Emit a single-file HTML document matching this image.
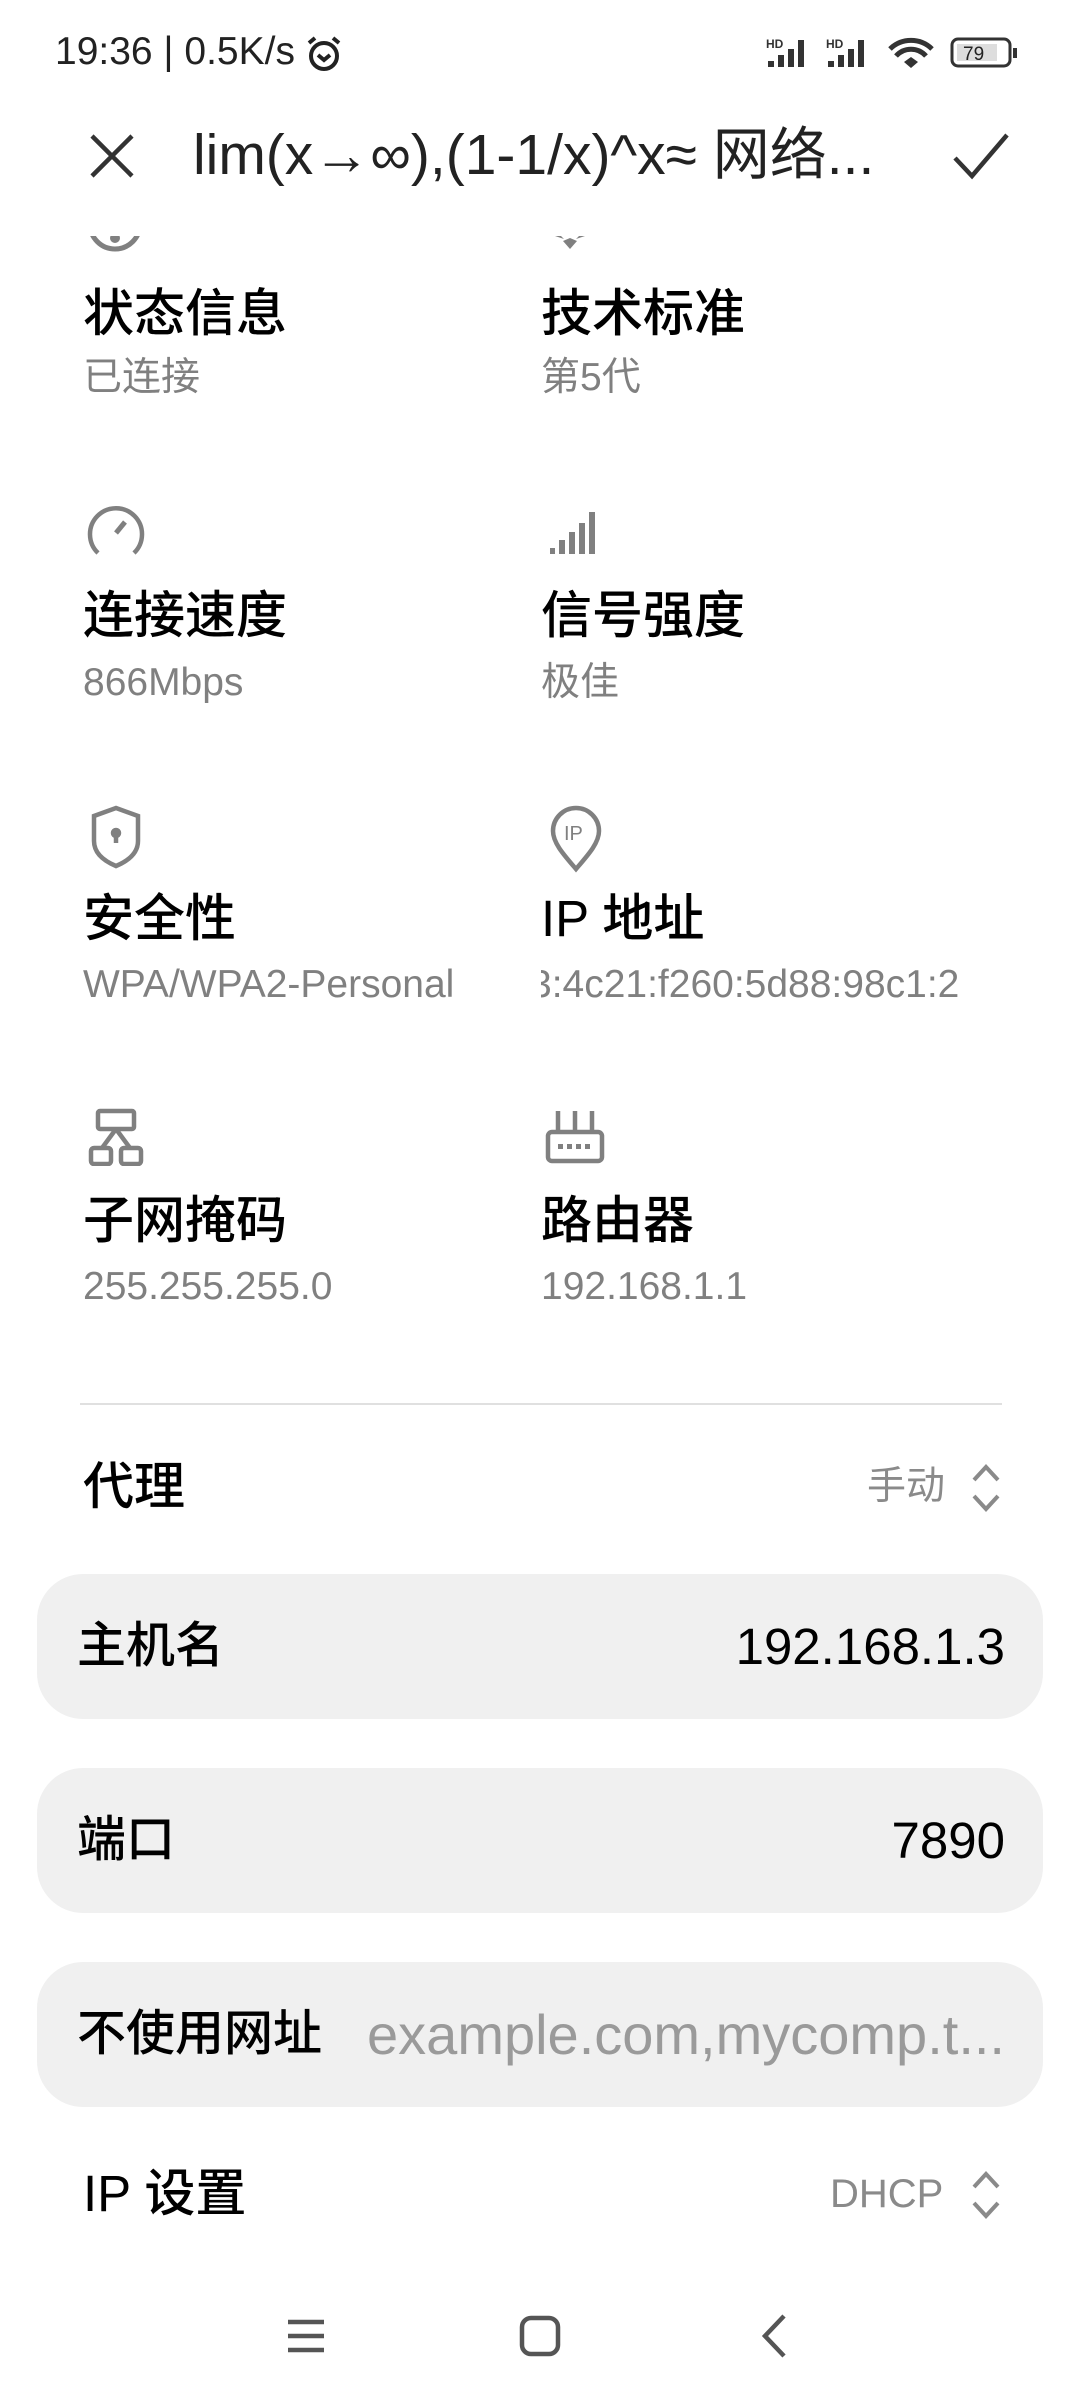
<!DOCTYPE html>
<html><head><meta charset="utf-8"><style>
*{margin:0;padding:0;box-sizing:border-box}
body{width:1080px;height:2400px;background:#fff;position:relative;overflow:hidden;font-family:"Liberation Sans","Noto Sans CJK SC",sans-serif;color:#000}
.a{position:absolute;white-space:nowrap}
.t{font-size:51px;line-height:60px;color:#000;font-weight:500}
.s{font-size:39px;line-height:44px;color:#808080}
.card{position:absolute;left:37px;width:1006px;height:145px;background:#f0f0f0;border-radius:46px}
.card .l{position:absolute;left:40px;top:0;line-height:145px;font-size:49px;color:#000;font-weight:500}
.card .r{position:absolute;right:38px;top:0;line-height:145px;font-size:51px;color:#000}
svg{position:absolute}
</style></head><body>
<!-- status bar -->
<div class="a" style="left:55px;top:29px;font-size:39px;line-height:46px;color:#222">19:36 | 0.5K/s</div>
<svg style="left:304px;top:34px" width="40" height="40" viewBox="0 0 40 40" fill="none" stroke="#222" stroke-width="4"><circle cx="20" cy="22" r="13"/><path d="M14 21l6 5 6-5"/><path d="M5 9l6-5M35 9l-6-5"/></svg>
<svg style="left:766px;top:37px" width="260" height="32" viewBox="0 0 260 32" fill="#333">
<text x="0" y="11" font-size="12" font-weight="bold" font-family="Liberation Sans">HD</text>
<rect x="2" y="24" width="6" height="6"/><rect x="12" y="18" width="6" height="12"/><rect x="22" y="12" width="6" height="18"/><rect x="32" y="3" width="6" height="27"/>
<g transform="translate(60,0)"><text x="0" y="11" font-size="12" font-weight="bold" font-family="Liberation Sans">HD</text>
<rect x="2" y="24" width="6" height="6"/><rect x="12" y="18" width="6" height="12"/><rect x="22" y="12" width="6" height="18"/><rect x="32" y="3" width="6" height="27"/></g>
<g fill="none" stroke="#333" stroke-width="5"><path d="M124 12a30 30 0 0 1 42 0"/><path d="M130 19a20 20 0 0 1 30 0"/></g>
<path d="M138 25l7-5 7 5-7 6z"/>
<rect x="186" y="2" width="58" height="27" rx="6" fill="none" stroke="#333" stroke-width="3"/>
<rect x="191" y="7" width="40" height="17" fill="#ddd"/>
<text x="197" y="23" font-size="19" font-family="Liberation Sans" fill="#222">79</text>
<rect x="247" y="11" width="4" height="10"/>
</svg>
<!-- title bar -->
<svg style="left:89px;top:133px" width="46" height="46" viewBox="0 0 46 46" stroke="#333" stroke-width="4.5"><path d="M3 3l40 40M43 3L3 43"/></svg>
<div class="a" style="left:193px;top:121px;font-size:57px;line-height:68px;color:#222">lim(x→∞),(1-1/x)^x≈ 网络...</div>
<svg style="left:952px;top:132px" width="58" height="48" viewBox="0 0 58 48" fill="none" stroke="#333" stroke-width="4.5"><path d="M3 26l17 18L55 3"/></svg>
<!-- partial icons -->
<svg style="left:86px;top:190px" width="62" height="65" viewBox="0 0 62 65" fill="none" stroke="#808080" stroke-width="5"><circle cx="29" cy="34" r="25"/><circle cx="29" cy="48" r="2.5" fill="#808080"/></svg>
<svg style="left:555px;top:236px" width="30" height="14" viewBox="0 0 30 14" fill="#808080"><path d="M0 0h6l3 3zM30 0h-6l-3 3zM8 5l7-3 7 3-7 8z"/></svg>
<div style="position:absolute;left:0;top:186px;width:1080px;height:50px;background:#fff"></div>
<!-- grid -->
<div class="a t" style="left:83px;top:284px">状态信息</div>
<div class="a s" style="left:83px;top:356px">已连接</div>
<div class="a t" style="left:541px;top:284px">技术标准</div>
<div class="a s" style="left:541px;top:356px">第5代</div>

<svg style="left:86px;top:503px" width="60" height="54" viewBox="0 0 60 54" fill="none" stroke="#808080" stroke-width="4.5"><path d="M12 50A26 26 0 1 1 48 50"/><path d="M30 30l9-11" stroke-width="5"/></svg>
<svg style="left:550px;top:510px" width="54" height="44" viewBox="0 0 54 44" fill="#808080"><rect x="0" y="38" width="5" height="6"/><rect x="9" y="30" width="6" height="14"/><rect x="19" y="22" width="6" height="22"/><rect x="29" y="13" width="6" height="31"/><rect x="39" y="2" width="6" height="42"/></svg>
<div class="a t" style="left:83px;top:586px">连接速度</div>
<div class="a s" style="left:83px;top:661px">866Mbps</div>
<div class="a t" style="left:541px;top:586px">信号强度</div>
<div class="a s" style="left:541px;top:661px">极佳</div>

<svg style="left:88px;top:805px" width="56" height="64" viewBox="0 0 56 64" fill="none" stroke="#808080" stroke-width="4.5"><path d="M28 3L50 11V36C50 48 40 56 28 61C16 56 6 48 6 36V11Z"/><circle cx="28" cy="28" r="3" fill="#808080"/><path d="M28 30v8"/></svg>
<svg style="left:549px;top:805px" width="54" height="68" viewBox="0 0 54 68" fill="none" stroke="#808080" stroke-width="4.5"><path d="M27 64C15 50 4 38 4 26A23 23 0 0 1 50 26C50 38 39 50 27 64Z"/><text x="15" y="35" font-size="20" font-family="Liberation Sans" fill="#808080" stroke="none">IP</text></svg>
<div class="a t" style="left:83px;top:889px">安全性</div>
<div class="a s" style="left:83px;top:963px">WPA/WPA2-Personal</div>
<div class="a t" style="left:541px;top:889px">IP 地址</div>
<div class="a s" style="left:530px;top:963px;width:470px;overflow:hidden">3:4c21:f260:5d88:98c1:2</div>
<div style="position:absolute;left:470px;top:958px;width:71px;height:55px;background:#fff"></div>

<svg style="left:88px;top:1108px" width="56" height="58" viewBox="0 0 56 58" fill="none" stroke="#808080" stroke-width="4.5"><rect x="10" y="3" width="36" height="18" rx="2"/><rect x="3" y="40" width="20" height="16" rx="3"/><rect x="33" y="40" width="20" height="16" rx="3"/><path d="M28 21L14 40M28 21L42 40"/></svg>
<svg style="left:545px;top:1108px" width="60" height="56" viewBox="0 0 60 56" fill="none" stroke="#808080" stroke-width="4.5"><rect x="3" y="24" width="54" height="29" rx="4"/><path d="M13 3v21M30 3v21M47 3v21"/><g fill="#808080" stroke="none"><rect x="13" y="36" width="5" height="5"/><rect x="22" y="36" width="5" height="5"/><rect x="31" y="36" width="5" height="5"/><rect x="40" y="36" width="5" height="5"/></g></svg>
<div class="a t" style="left:83px;top:1191px">子网掩码</div>
<div class="a s" style="left:83px;top:1265px">255.255.255.0</div>
<div class="a t" style="left:541px;top:1191px">路由器</div>
<div class="a s" style="left:541px;top:1265px">192.168.1.1</div>

<div style="position:absolute;left:80px;top:1403px;width:922px;height:2px;background:#e0e0e0"></div>
<div class="a t" style="left:83px;top:1457px">代理</div>
<div class="a" style="left:867px;top:1464px;font-size:39px;line-height:46px;color:#8a8a8a">手动</div>
<svg style="left:970px;top:1462px" width="32" height="52" viewBox="0 0 32 52" fill="none" stroke="#8a8a8a" stroke-width="4"><path d="M4 18L16 5l12 13M4 34l12 13 12-13"/></svg>

<div class="card" style="top:1574px"><span class="l">主机名</span><span class="r">192.168.1.3</span></div>
<div class="card" style="top:1768px"><span class="l">端口</span><span class="r">7890</span></div>
<div class="card" style="top:1962px"><span class="l">不使用网址</span><span class="r" style="color:#9a9a9a;font-size:56px">example.com,mycomp.t...</span></div>

<div class="a t" style="left:83px;top:2164px">IP 设置</div>
<div class="a" style="left:830px;top:2171px;font-size:40px;line-height:46px;color:#8a8a8a">DHCP</div>
<svg style="left:970px;top:2169px" width="32" height="52" viewBox="0 0 32 52" fill="none" stroke="#8a8a8a" stroke-width="4"><path d="M4 18L16 5l12 13M4 34l12 13 12-13"/></svg>

<!-- nav -->
<svg style="left:286px;top:2316px" width="40" height="40" viewBox="0 0 40 40" stroke="#555" stroke-width="4.5"><path d="M2 6h36M2 20h36M2 34h36"/></svg>
<svg style="left:519px;top:2315px" width="42" height="42" viewBox="0 0 42 42" fill="none" stroke="#555" stroke-width="4.5"><rect x="3" y="3" width="36" height="36" rx="9"/></svg>
<svg style="left:760px;top:2313px" width="30" height="46" viewBox="0 0 30 46" fill="none" stroke="#555" stroke-width="4.5"><path d="M24 3L5 23l19 20"/></svg>
</body></html>
